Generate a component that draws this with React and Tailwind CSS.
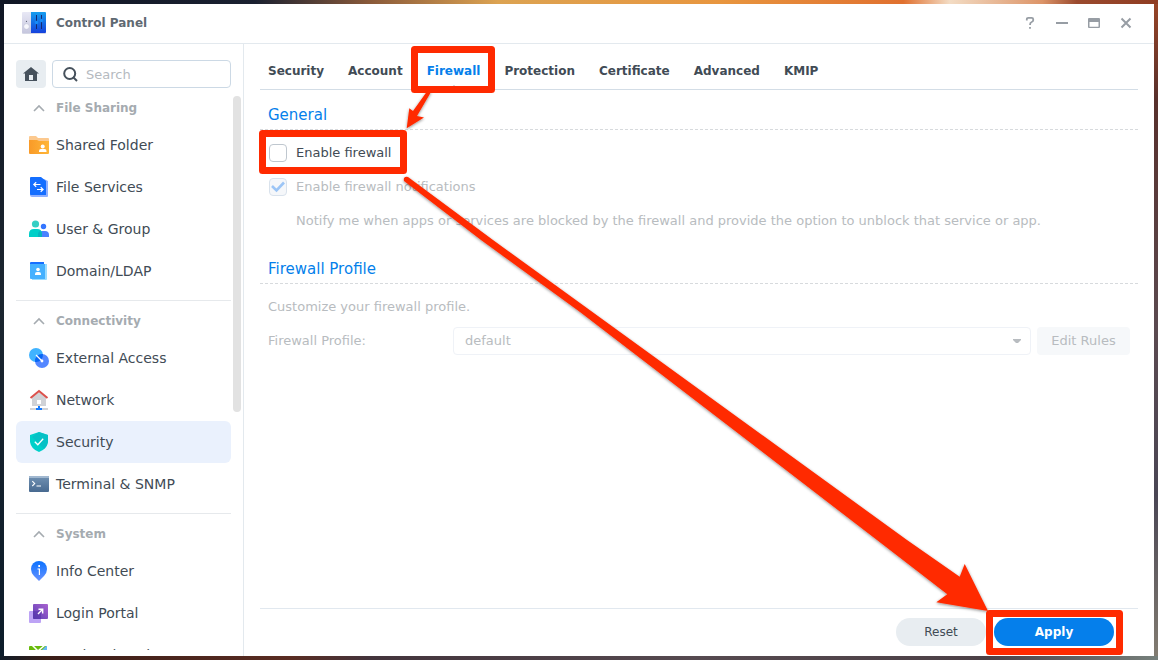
import React, { useState } from 'react';
import { clsx } from 'clsx';

const SharedFolderIcon = () => (
  <svg width="20" height="20" viewBox="0 0 20 20" aria-hidden="true">
    <defs>
      <linearGradient id="folder" x1="0" y1="0" x2="1" y2="0">
        <stop offset="0" stopColor="#f99a28" />
        <stop offset="1" stopColor="#ffb638" />
      </linearGradient>
    </defs>
    <path d="M0 2a1 1 0 0 1 1-1h6l2 2h10a1 1 0 0 1 1 1v4H0z" fill="#fcc98f" />
    <path d="M0 5h8l2 1h10v12a1 1 0 0 1-1 1H1a1 1 0 0 1-1-1z" fill="url(#folder)" />
    <circle cx="13.700" cy="11.500" r="2" fill="#fff" />
    <path d="M10 17v-1q0-2 2-2h3.500q2 0 2 2v1z" fill="#fff" />
  </svg>
);

const FileServicesIcon = () => (
  <svg width="20" height="20" viewBox="0 0 20 20" aria-hidden="true">
    <path d="M1 2h14l4 2v15a1 1 0 0 1-1 1H3a2 2 0 0 1-2-2z" fill="#8fb0ff" />
    <path d="M1 1a1 1 0 0 1 1-1h10l5 4v14H2a1 1 0 0 1-1-1z" fill="#146eff" />
    <path d="M11.500 7.500H5M7.200 5.200 4.800 7.500l2.400 2.300M8 12.500h6M11.700 10.200l2.400 2.300-2.400 2.300" fill="none" stroke="#fff" strokeWidth="1.200" />
  </svg>
);

const UserGroupIcon = () => (
  <svg width="20" height="20" viewBox="0 0 20 20" aria-hidden="true">
    <circle cx="14.500" cy="7.500" r="2.700" fill="#3576ff" />
    <path d="M9 18v-3q1-3 4-3h3q4 0 4 4v2z" fill="#4a82ff" />
    <circle cx="6.500" cy="5" r="3.600" fill="#35cfc4" />
    <path d="M0 18v-3q0-5 5-5h3q5 0 5 5v3z" fill="#00cfc8" />
    <path d="M9 18v-3q0-2 2-3 2 1 2 3v3z" fill="#08b4c0" />
  </svg>
);

const DomainIcon = () => (
  <svg width="20" height="20" viewBox="0 0 20 20" aria-hidden="true">
    <path d="M1 2a1 1 0 0 1 1-1h13v3H1z" fill="#176fff" />
    <path d="M14 3h4v15a1 1 0 0 1-1 1H3v-2h11z" fill="#9bdcff" />
    <path d="M1 3h15v15H2a1 1 0 0 1-1-1z" fill="#45b1ff" />
    <circle cx="9" cy="8.500" r="1.800" fill="#fff" />
    <path d="M6 14v-1q0-2 2-2h2q2 0 2 2v1z" fill="#fff" />
  </svg>
);

const ExternalAccessIcon = () => (
  <svg width="20" height="20" viewBox="0 0 20 20" aria-hidden="true">
    <circle cx="7" cy="7" r="7" fill="#40b3ff" />
    <circle cx="13" cy="13" r="7" fill="#5487ff" />
    <path d="M6.060 13.940A7 7 0 0 1 13.940 6.060 7 7 0 0 1 6.060 13.940" fill="#0666f5" />
    <path d="m7 7 6 6" stroke="#fff" strokeWidth="1.200" />
    <circle cx="13" cy="13" r="1.400" fill="#fff" />
  </svg>
);

const NetworkIcon = () => (
  <svg width="20" height="22" viewBox="0 0 20 22" aria-hidden="true">
    <path d="m3 8 7-5 7 5v9H3z" fill="#d0d2d6" />
    <path d="M1.500 9 10 2l8.500 7" fill="none" stroke="#dc514c" strokeWidth="2" />
    <path d="M8 11h4v4H8z" fill="#fff" />
    <path d="M1 19h18v2H1z" fill="#d0d2d6" />
    <path d="M9 17h2v2h2v2H7v-2h2z" fill="#147aff" />
  </svg>
);

const SecurityIcon = () => (
  <svg width="20" height="20" viewBox="0 0 20 20" aria-hidden="true">
    <path d="m10 0 9 3v7q-1 7-9 10-8-3-9-10V3z" fill="#00d0ca" />
    <path d="m10 0 9 3v7q-.5 4-4 7L3 5z" fill="#08bdc4" opacity=".8" />
    <path d="m5.800 9.800 3 3 5.400-6" fill="none" stroke="#fff" strokeWidth="1.300" />
  </svg>
);

const TerminalIcon = () => (
  <svg width="20" height="20" viewBox="0 0 20 20" aria-hidden="true">
    <defs>
      <linearGradient id="term" x1="0" y1="0" x2="0" y2="1">
        <stop offset="0" stopColor="#7192b3" />
        <stop offset="1" stopColor="#486a90" />
      </linearGradient>
    </defs>
    <path d="M0 3a1 1 0 0 1 1-1h18a1 1 0 0 1 1 1v14a1 1 0 0 1-1 1H1a1 1 0 0 1-1-1z" fill="url(#term)" />
    <path d="M0 4V3a1 1 0 0 1 1-1h18a1 1 0 0 1 1 1v1z" fill="#a1b8d0" />
    <path d="m3.300 7.200 2.400 2.400-2.400 2.400M7.500 12H12" fill="none" stroke="#fff" strokeWidth="1.100" />
  </svg>
);

const InfoIcon = () => (
  <svg width="20" height="20" viewBox="0 0 20 20" aria-hidden="true">
    <defs>
      <linearGradient id="info" x1="0" y1="0" x2="0" y2="1">
        <stop offset="0" stopColor="#0a72ff" />
        <stop offset="1" stopColor="#6892ff" />
      </linearGradient>
    </defs>
    <path d="M10 0a8 8 0 0 1 8 8q0 4-3 7l-5 5-5-5Q2 12 2 8a8 8 0 0 1 8-8" fill="url(#info)" />
    <path d="M9.300 4h1.700v2H9.300z" fill="#fff" />
    <path d="M8.500 8h1.900v6" fill="none" stroke="#fff" strokeWidth="1.200" />
  </svg>
);

const LoginPortalIcon = () => (
  <svg width="20" height="20" viewBox="0 0 20 20" aria-hidden="true">
    <defs>
      <linearGradient id="portal" x1="1" y1="0" x2="0" y2="1">
        <stop offset="0" stopColor="#a963cf" />
        <stop offset="1" stopColor="#5c3eb5" />
      </linearGradient>
    </defs>
    <rect y="8" width="12" height="12" rx="1" fill="#bda3f5" />
    <rect x="4" y="1" width="15" height="15" rx="1" fill="url(#portal)" />
    <path d="M4 8h8v8H5a1 1 0 0 1-1-1z" fill="#4f32a5" opacity=".5" />
    <path d="m9 11 4.400-4.400M9.500 6.300H13.700V10.500" fill="none" stroke="#fff" strokeWidth="1.400" />
  </svg>
);

const RegionalIcon = () => (
  <svg width="20" height="20" viewBox="0 0 20 20" aria-hidden="true">
    <rect y="1" width="18" height="18" rx="1" fill="#69bb0b" />
    <path d="M11 7 17 1h1v9z" fill="#66b8f7" />
    <path d="m3 0 6 6 7-6M9 6v13" fill="none" stroke="#fff" strokeWidth="1.500" />
  </svg>
);

const ControlPanelIcon = () => (
  <svg width="24" height="24" viewBox="0 0 24 24" aria-hidden="true">
    <defs>
      <linearGradient id="panelGrey" x1="0" y1="0" x2="0" y2="1">
        <stop offset="0" stopColor="#e8e8f5" />
        <stop offset="1" stopColor="#c6c7de" />
      </linearGradient>
      <linearGradient id="panelBlue" x1="0" y1="0" x2="0" y2="1">
        <stop offset="0" stopColor="#159dee" />
        <stop offset="1" stopColor="#1541dd" />
      </linearGradient>
    </defs>
    <rect y="2" width="24" height="21" rx="1" fill="#b9bdd3" opacity=".6" />
    <path d="M1 1h8v21H1a1 1 0 0 1-1-1V2a1 1 0 0 1 1-1" fill="url(#panelGrey)" />
    <path d="M9 1h14a1 1 0 0 1 1 1v19a1 1 0 0 1-1 1H9z" fill="url(#panelBlue)" />
    <circle cx="4.500" cy="10.300" r=".6" fill="#50566a" />
    <circle cx="4.500" cy="15.500" r="2.800" fill="#f7f7fc" stroke="#b8bbd2" strokeWidth=".5" />
    <path d="M14.500 4v14M19.500 4v14" stroke="#152a72" strokeWidth="1" />
    <circle cx="14.500" cy="11.500" r="1.700" fill="#168cf8" />
    <circle cx="19.500" cy="9.500" r="1.700" fill="#168cf8" />
  </svg>
);

const groups = [
  {
    title: 'File Sharing',
    items: [
      { label: 'Shared Folder', icon: SharedFolderIcon },
      { label: 'File Services', icon: FileServicesIcon },
      { label: 'User & Group', icon: UserGroupIcon },
      { label: 'Domain/LDAP', icon: DomainIcon },
    ],
  },
  {
    title: 'Connectivity',
    items: [
      { label: 'External Access', icon: ExternalAccessIcon },
      { label: 'Network', icon: NetworkIcon },
      { label: 'Security', icon: SecurityIcon },
      { label: 'Terminal & SNMP', icon: TerminalIcon },
    ],
  },
  {
    title: 'System',
    items: [
      { label: 'Info Center', icon: InfoIcon },
      { label: 'Login Portal', icon: LoginPortalIcon },
      { label: 'Regional Options', icon: RegionalIcon },
    ],
  },
];

const tabs = ['Security', 'Account', 'Firewall', 'Protection', 'Certificate', 'Advanced', 'KMIP'];

const TitleBar = () => (
  <header className="flex h-10 shrink-0 items-center border-b border-[#e3e9ee] pr-[18px] pb-0.5 pl-[18px]">
    <ControlPanelIcon />
    <h1 className="ml-2.5 flex-1 text-[12px] font-bold text-[#5f6972]">Control Panel</h1>
    <div className="flex gap-3 text-[#979da4]">
      <button aria-label="Help" className="flex size-5 items-center justify-center">
        <svg width="12" height="14" viewBox="0 0 12 14">
          <path d="M2.800 4.500V3.300q0-1.500 1.500-1.500h3.400q1.500 0 1.500 1.500v1q0 1.200-1.500 1.700Q6 6.600 6 9" fill="none" stroke="currentColor" strokeWidth="1.800" />
          <path d="M5.100 11h1.800v1.800H5.100z" fill="currentColor" />
        </svg>
      </button>
      <button aria-label="Minimize" className="flex size-5 items-center justify-center">
        <svg width="12" height="12" viewBox="0 0 12 12"><path d="M0 5h12v2H0z" fill="currentColor" /></svg>
      </button>
      <button aria-label="Maximize" className="flex size-5 items-center justify-center">
        <svg width="12" height="12" viewBox="0 0 12 12">
          <path d="M1 1h10a1 1 0 0 1 1 1v8a1 1 0 0 1-1 1H1a1 1 0 0 1-1-1V2a1 1 0 0 1 1-1m.5 4v4.700h9V5z" fill="currentColor" fillRule="evenodd" />
        </svg>
      </button>
      <button aria-label="Close" className="flex size-5 items-center justify-center">
        <svg width="12" height="12" viewBox="0 0 12 12"><path d="m1.500 1.500 9 9m0-9-9 9" stroke="currentColor" strokeWidth="2" /></svg>
      </button>
    </div>
  </header>
);

const Sidebar = () => {
  const [active, setActive] = useState('Security');

  return (
    <aside className="flex w-60 shrink-0 flex-col border-r border-[#e3e9ee] pb-1.5">
      <div className="flex shrink-0 gap-1.5 pt-4 pr-3 pl-3">
        <button aria-label="Home" className="flex h-7 w-[30px] shrink-0 items-center justify-center rounded-sm bg-[#e8edf1] text-[#46515c]">
          <svg width="16" height="14" viewBox="0 0 16 14">
            <path d="m8 0 8 6.500h-2V14H2V6.500H0zM6 8v5h4V8z" fill="currentColor" fillRule="evenodd" />
          </svg>
        </button>
        <div className="flex h-7 min-w-0 flex-1 items-center gap-2 rounded border border-[#ccd9e5] pl-2.5">
          <svg width="15" height="15" viewBox="0 0 15 15" className="shrink-0 text-[#46515c]" aria-hidden="true">
            <circle cx="6.700" cy="6.500" r="5.500" fill="none" stroke="currentColor" strokeWidth="2" />
            <path d="m10 10 4 4" stroke="currentColor" strokeWidth="2" />
          </svg>
          <input type="search" aria-label="Search" placeholder="Search" className="w-full min-w-0 pt-0.5 text-[13px] outline-none placeholder:text-[#b5babf]" />
        </div>
      </div>
      <div className="flex min-h-0 flex-1">
        <nav className="min-w-0 flex-1 overflow-hidden pl-3">
          {groups.map((group, i) => (
            <section key={group.title} className={clsx(i > 0 && 'mt-2 border-t border-[#e6e9ec]')}>
              <h2 className="flex h-9 items-center pt-1 pl-4 text-[12px] font-bold text-[#a5abb0]">
                <svg width="14" height="8" viewBox="0 0 14 8" className="mr-2.5" aria-hidden="true">
                  <path d="m2 7 5-5 5 5" fill="none" stroke="currentColor" strokeWidth="1.600" />
                </svg>
                {group.title}
              </h2>
              {group.items.map(({ label, icon: Icon }) => (
                <a
                  key={label}
                  href="#"
                  onClick={() => setActive(label)}
                  className={clsx(
                    'flex h-[42px] items-center gap-[7px] rounded-md pl-[13px] text-[14px] text-[#414b55]',
                    active === label && 'bg-[#eaf1fd]'
                  )}
                >
                  <Icon />
                  {label}
                </a>
              ))}
            </section>
          ))}
        </nav>
        <div className="w-3 pt-2 pl-0.5">
          <div className="h-[316px] w-2 rounded-full bg-[#e2e2e2]" />
        </div>
      </div>
    </aside>
  );
};

const SectionTitle = ({ children }) => (
  <h2 className="h-[30px] border-b border-dashed border-[#d7dadd] px-2 text-[15px] leading-[30px] text-[#057feb]">{children}</h2>
);

const FirewallForm = () => {
  const [enabled, setEnabled] = useState(false);

  return (
    <div className="flex-1 pt-2.5 text-[13px] text-[#b8bcc0]">
      <SectionTitle>General</SectionTitle>
      <div className="px-2 pt-1.5">
        <div className="pl-px">
          <label className="flex h-[34px] w-fit items-center gap-[9px] text-[#414b55]">
            <input
              type="checkbox"
              checked={enabled}
              onChange={(e) => setEnabled(e.target.checked)}
              className="size-[18px] appearance-none rounded-sm border border-[#bfc7cf] bg-white checked:bg-[#057feb]"
            />
            Enable firewall
          </label>
          <label className="grid h-[34px] w-fit grid-cols-[18px_auto] items-center gap-[9px]">
            <input type="checkbox" checked={true} disabled readOnly className="col-start-1 row-start-1 size-[18px] appearance-none rounded-sm border border-[#d9e2ec] bg-[#f5f7fa]" />
            <svg width="18" height="18" viewBox="0 0 18 18" className="pointer-events-none col-start-1 row-start-1" aria-hidden="true">
              <path d="m3 8 4.500 4.500L15 4.500" fill="none" stroke="#9cc5f6" strokeWidth="2.600" />
            </svg>
            <span>Enable firewall notifications</span>
          </label>
        </div>
        <p className="flex h-[34px] items-center pl-7 whitespace-nowrap">
          Notify me when apps or services are blocked by the firewall and provide the option to unblock that service or app.
        </p>
      </div>
      <div className="pt-4">
        <SectionTitle>Firewall Profile</SectionTitle>
      </div>
      <div className="px-2 pt-1.5">
        <p className="flex h-[34px] items-center">Customize your firewall profile.</p>
        <div className="flex h-[34px] items-center">
          <label htmlFor="profile" className="w-[185px] shrink-0">Firewall Profile:</label>
          <div className="grid min-w-0 flex-1 items-center">
            <select id="profile" disabled className="col-start-1 row-start-1 h-7 w-full appearance-none rounded border border-[#eff2f7] bg-white px-[11px] opacity-100">
              <option>default</option>
            </select>
            <svg width="8" height="4" viewBox="0 0 8 4" className="pointer-events-none col-start-1 row-start-1 mr-2.5 justify-self-end" aria-hidden="true">
              <path d="M0 0h8v1L5 4H3L0 1z" fill="#b8bcc0" />
            </svg>
          </div>
          <button disabled className="ml-1.5 h-7 w-[93px] rounded-sm bg-[#f6f8fa]">Edit Rules</button>
        </div>
      </div>
    </div>
  );
};

// Red boxes and arrows drawn over the window
const Annotations = () => (
  <svg width="1158" height="660" viewBox="0 0 1158 660" className="pointer-events-none absolute top-0 left-0" aria-hidden="true">
    <defs>
      <filter id="shadow" x="-5%" y="-5%" width="110%" height="110%">
        <feDropShadow dx="0" dy="1" stdDeviation="1.500" floodColor="#000" floodOpacity=".45" />
      </filter>
    </defs>
    <g fill="#ff2a00" filter="url(#shadow)">
      <path d="M428 90 431 92 417 116 424 117.500 406.700 128.300 409.300 108.300 413 111Z" />
      <path d="M404 181Q403 176 408 177L493 240 580 303 907 540 959.700 576.700 964.700 564 988 611 936.300 602.300 947.300 594.300 877 540 580 312 481 240Z" />
    </g>
    <g fill="none" stroke="#ff2a00" strokeWidth="7" strokeLinejoin="round">
      <rect x="414.500" y="49.500" width="77" height="40" />
      <rect x="262.500" y="133.500" width="141" height="37" />
      <rect x="989.500" y="613.500" width="130" height="38" />
    </g>
  </svg>
);

const App = () => {
  const [tab, setTab] = useState('Firewall');

  return (
    <div className="relative flex h-screen p-1 font-['DejaVu_Sans',Verdana,sans-serif] [background:linear-gradient(to_right,#101624,#1a2030_22%,#8a5a3a_32%,#dca352_43%,#e8963f_62%,#e0702f_78%,#f3dcc4_82%,#dc9468_90%,#9a4a2e_93%,#8f3c22)_top/100%_4px_no-repeat,linear-gradient(to_right,#101c28,#3a1d17_4%,#5a2c22_25%,#43343c_32%,#564a50_60%,#4c4046_85%,#76807c)_bottom/100%_4px_no-repeat,linear-gradient(to_bottom,#101624,#1c2630_45%,#0c1c2a)_left/4px_100%_no-repeat,linear-gradient(to_bottom,#9a4526,#58302c_15%,#5b4a50_50%,#4a4654_75%,#837d72)_right/4px_100%_no-repeat]">
      <div className="flex min-w-0 flex-1 flex-col overflow-hidden rounded-sm bg-white">
        <TitleBar />
        <div className="flex min-h-0 flex-1">
          <Sidebar />
          <main className="flex min-w-0 flex-1 flex-col px-4">
            <div role="tablist" className="flex h-[46px] shrink-0 gap-6 border-b border-[#d3dde6] px-2 pt-2">
              {tabs.map((name) => (
                <button
                  key={name}
                  role="tab"
                  aria-selected={tab === name}
                  onClick={() => setTab(name)}
                  className={clsx('relative text-[12px] font-bold', tab === name ? 'text-[#057feb]' : 'text-[#414b55]')}
                >
                  {name}
                  {tab === name && (
                    <svg width="8" height="5" viewBox="0 0 8 5" className="absolute inset-x-0 bottom-0 mx-auto" aria-hidden="true">
                      <path d="m0 5 4-4 4 4" fill="none" stroke="#d3dde6" />
                    </svg>
                  )}
                </button>
              ))}
            </div>
            <FirewallForm />
            <footer className="flex h-12 shrink-0 justify-end gap-2 border-t border-[#e1e8ef] pt-[9px] pr-6 text-[12px]">
              <button className="h-7 w-[90px] rounded-full bg-[#e8edf1] text-[#414b55]">Reset</button>
              <button className="h-7 w-[120px] rounded-full bg-[#057feb] font-bold text-white">Apply</button>
            </footer>
          </main>
        </div>
      </div>
      <Annotations />
    </div>
  );
};

export default App;
